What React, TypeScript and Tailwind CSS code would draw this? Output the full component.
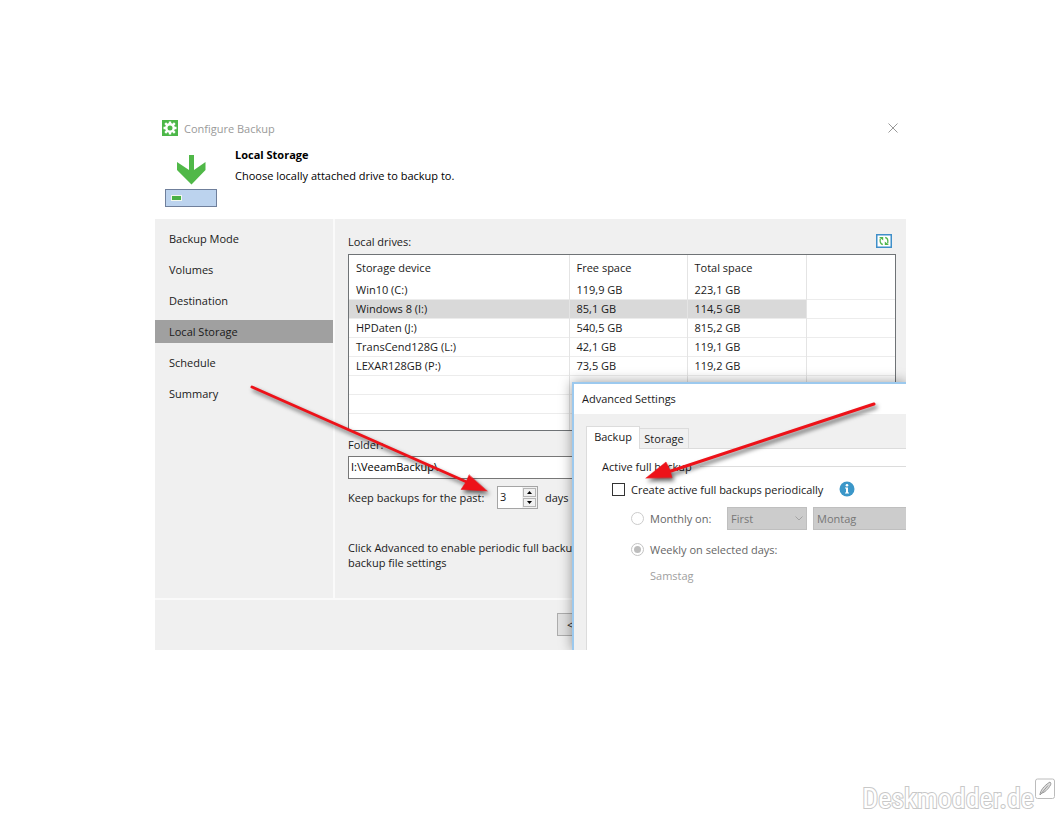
import React, { useState } from 'react';

const steps = ['Backup Mode', 'Volumes', 'Destination', 'Local Storage', 'Schedule', 'Summary'];

const drives = [
  { name: 'Win10 (C:)', free: '119,9 GB', total: '223,1 GB' },
  { name: 'Windows 8 (I:)', free: '85,1 GB', total: '114,5 GB' },
  { name: 'HPDaten (J:)', free: '540,5 GB', total: '815,2 GB' },
  { name: 'TransCend128G (L:)', free: '42,1 GB', total: '119,1 GB' },
  { name: 'LEXAR128GB (P:)', free: '73,5 GB', total: '119,2 GB' },
];

const GearIcon = () => (
  <svg width="16" height="16" viewBox="0 0 16 16" className="shrink-0">
    <rect width="16" height="16" fill="#4cb748" />
    <circle cx="8" cy="8" r="3.700" fill="none" stroke="#fff" strokeWidth="2.400" />
    <g stroke="#fff" strokeWidth="2.400">
      <path d="M8 1.500v2.500M8 12v2.500M1.500 8H4M12 8h2.500M3.200 3.200l2 2M10.800 10.800l2 2M12.800 3.200l-2 2M5.200 10.800l-2 2" />
    </g>
  </svg>
);

const DriveIcon = () => (
  <svg width="53" height="53" viewBox="0 0 53 53" className="shrink-0">
    <path d="M24 0h5v15l11.500-8v8L26.500 29.500 12 15V7l12 8z" fill="#50b848" />
    <rect x="0.500" y="34.500" width="51" height="17" fill="#bcd3ee" stroke="#6f7f9b" />
    <rect x="6.500" y="40.500" width="10" height="5" fill="#48b045" stroke="#f2f8ef" />
  </svg>
);

const RefreshIcon = () => (
  <svg width="16" height="14" viewBox="0 0 16 14">
    <rect x="0.750" y="0.750" width="14.500" height="12.500" fill="#fff" stroke="#3f8fc9" strokeWidth="1.500" />
    <path d="M6.800 10.500C4.500 10 3.800 7.500 4.300 4.500" fill="none" stroke="#52b54b" strokeWidth="1.300" />
    <path d="M9.200 3.500c2.300.5 3 3 2.500 6" fill="none" stroke="#52b54b" strokeWidth="1.300" />
    <path d="M3 3h4.200v3.500zM13 11H8.800V7.500z" fill="#52b54b" />
  </svg>
);

const Arrows = () => (
  <svg viewBox="0 0 751 537" className="absolute left-0 top-0 w-[751px] h-[537px] pointer-events-none drop-shadow-[2px_3px_2px_rgba(0,0,0,0.6)]">
    <g fill="#ed1219" stroke="#ed1219" strokeLinecap="round">
      <path d="M97 274L314 370" strokeWidth="3" />
      <path d="M332 378L306 376.500L311 369L314 362z" strokeWidth="0.500" />
      <path d="M719 291L516 358" strokeWidth="3" />
      <path d="M491 365L511 349L515 357L517 364.500z" strokeWidth="0.500" />
    </g>
  </svg>
);

const DriveTable = () => {
  const [selected, setSelected] = useState(1);

  return (
    <div className="h-[177px] overflow-hidden border border-[#6f7376] bg-white">
      <table className="w-full table-fixed border-collapse text-left">
        <colgroup>
          <col className="w-[220px]" />
          <col className="w-[118px]" />
          <col className="w-[119px]" />
          <col />
        </colgroup>
        <thead>
          <tr className="h-[25px]">
            <th className="border-r border-[#e4e4e4] p-0 pl-[7px] font-normal">Storage device</th>
            <th className="border-r border-[#e4e4e4] p-0 pl-[7px] font-normal">Free space</th>
            <th className="border-r border-[#e4e4e4] p-0 pl-[7px] font-normal">Total space</th>
            <th className="p-0"></th>
          </tr>
        </thead>
        <tbody>
          {drives.map((drive, i) => {
            const fill = i === selected ? 'bg-[#d9d9d9]' : '';
            return (
              <tr key={drive.name} onClick={() => setSelected(i)} className="h-[19px] border-b border-[#ececec]">
                <td className={`border-r border-[#e4e4e4] p-0 pl-[7px] ${fill}`}>{drive.name}</td>
                <td className={`border-r border-[#e4e4e4] p-0 pl-[7px] ${fill}`}>{drive.free}</td>
                <td className={`border-r border-[#e4e4e4] p-0 pl-[7px] ${fill}`}>{drive.total}</td>
                <td className="p-0"></td>
              </tr>
            );
          })}
          {[0, 1, 2].map((i) => (
            <tr key={i} className="h-[19px] border-b border-[#ececec]">
              <td className="border-r border-[#e4e4e4] p-0"></td>
              <td className="border-r border-[#e4e4e4] p-0"></td>
              <td className="border-r border-[#e4e4e4] p-0"></td>
              <td className="p-0"></td>
            </tr>
          ))}
        </tbody>
      </table>
    </div>
  );
};

const AdvancedSettings = () => (
  <div
    role="dialog"
    aria-labelledby="advanced-title"
    className="absolute left-[417px] right-0 top-[269px] bottom-0 flex flex-col overflow-hidden border-l-2 border-t-2 border-[#9cc9ee] bg-[#f0f0f0] shadow-[0_0_12px_rgba(0,0,0,0.4)]"
  >
    <h2 id="advanced-title" className="h-[30px] shrink-0 bg-white pl-2 leading-[30px]">Advanced Settings</h2>

    <div role="tablist" className="flex shrink-0 items-end pl-3 pt-3">
      <button role="tab" aria-selected="true" className="h-[23px] w-[54px] border border-b-0 border-[#dcdcdc] bg-white pb-[3px]">
        Backup
      </button>
      <button role="tab" aria-selected="false" className="h-[21px] w-[49px] border border-l-0 border-[#dcdcdc] pb-px">
        Storage
      </button>
      <span className="flex-1 border-b border-[#dcdcdc]"></span>
    </div>

    <div role="tabpanel" className="ml-3 flex-1 border-l border-[#dcdcdc] bg-white pl-[15px] pt-[10px]">
      <div className="flex items-center gap-2">
        <span className="whitespace-nowrap">Active full backup</span>
        <span className="h-px flex-1 bg-[#dcdcdc]"></span>
      </div>

      <div className="mt-[7px] flex items-center pl-[10px]">
        <input id="periodic" type="checkbox" className="h-[13px] w-[13px] appearance-none border border-[#333] bg-white checked:bg-[#333]" />
        <label htmlFor="periodic" className="ml-[6px] whitespace-nowrap">Create active full backups periodically</label>
        <svg width="16" height="16" viewBox="0 0 16 16" className="ml-4">
          <circle cx="8" cy="8" r="7.500" fill="#3b97c9" />
          <circle cx="8" cy="4.300" r="1.300" fill="#fff" />
          <path d="M6 6.500h3v5h1v1H6v-1h1v-4H6z" fill="#fff" />
        </svg>
      </div>

      <div className="mt-[10px] flex h-[23px] items-center pl-[29px] text-[#666]">
        <input id="monthly" type="radio" name="period" disabled className="h-[13px] w-[13px] shrink-0 appearance-none rounded-full border border-[#ccc] bg-white" />
        <label htmlFor="monthly" className="ml-[6px] w-[77px] shrink-0">Monthly on:</label>
        <div className="relative w-[80px] shrink-0">
          <select aria-label="Week" disabled className="h-[23px] w-full appearance-none border border-[#bfbfbf] bg-[#cccccc] pl-[3px] text-[#777] opacity-100">
            <option>First</option>
          </select>
          <svg width="8" height="5" viewBox="0 0 8 5" className="absolute right-1 top-[9px]">
            <path d="M0.500 0.500L4 4L7.500 0.500" fill="none" stroke="#a3a3a3" />
          </svg>
        </div>
        <select aria-label="Weekday" disabled className="ml-[6px] h-[23px] w-[120px] shrink-0 appearance-none border border-[#bfbfbf] bg-[#cccccc] pl-[3px] text-[#777] opacity-100">
          <option>Montag</option>
        </select>
      </div>

      <div className="mt-3 flex items-center pl-[29px] text-[#666]">
        <span className="relative flex h-[13px] w-[13px] items-center justify-center rounded-full border border-[#c4c4c4]">
          <input id="weekly" type="radio" name="period" disabled defaultChecked className="h-[7px] w-[7px] appearance-none rounded-full bg-[#bdbdbd]" />
        </span>
        <label htmlFor="weekly" className="ml-[6px]">Weekly on selected days:</label>
      </div>
      <p className="mt-[11px] pl-12 text-[#a0a0a0]">Samstag</p>
    </div>
  </div>
);

const App: React.FC = () => {
  const [days, setDays] = useState(3);
  const [folder, setFolder] = useState('I:\\VeeamBackup\\');

  return (
    <div className="relative min-h-screen overflow-hidden bg-white pb-[166px] pl-[155px] pr-[150px] pt-[113px] font-['Open_Sans','Noto_Sans',sans-serif] text-[11px] leading-[15px] text-[#1a1a1a]">
      <main className="relative overflow-hidden">
        <div className="flex h-[30px] items-center pl-[7px] pr-[7px]">
          <GearIcon />
          <span className="ml-[6px] flex-1 text-[#9a9a9a]">Configure Backup</span>
          <button aria-label="Close" className="p-px">
            <svg width="10" height="10" viewBox="0 0 10 10">
              <path d="M0.500 0.500l9 9M9.500 0.500l-9 9" stroke="#999" />
            </svg>
          </button>
        </div>

        <header className="flex h-[76px] pl-[10px]">
          <div className="pt-3">
            <DriveIcon />
          </div>
          <div className="pl-[17px] pt-1">
            <h1 className="font-bold text-black">Local Storage</h1>
            <p className="mt-[6px] text-black">Choose locally attached drive to backup to.</p>
          </div>
        </header>

        <div className="flex bg-[#f0f0f0]">
          <nav className="w-[180px] shrink-0 border-r-2 border-[#fafafa] pt-2">
            <ul className="flex flex-col gap-2">
              {steps.map((step) => (
                <li key={step}>
                  <a
                    href="#"
                    className={`block h-[23px] pl-[14px] leading-[23px] ${step === 'Local Storage' ? 'bg-[#a0a0a0]' : ''}`}
                  >
                    {step}
                  </a>
                </li>
              ))}
            </ul>
          </nav>

          <section className="min-w-0 flex-1 pb-7 pl-[13px] pr-[10px] pt-[15px]">
            <div className="mb-[6px] flex h-[14px] items-center justify-between pr-1">
              <span>Local drives:</span>
              <button aria-label="Refresh">
                <RefreshIcon />
              </button>
            </div>

            <DriveTable />

            <label htmlFor="folder" className="mt-[6px] block">Folder:</label>
            <input
              id="folder"
              type="text"
              value={folder}
              onChange={(e) => setFolder(e.target.value)}
              className="mt-1 block h-[23px] w-full border border-[#777] bg-white px-[2px] pb-[2px] text-black"
            />

            <div className="mt-[7px] flex h-[23px] items-center">
              <label htmlFor="days" className="w-[149px] whitespace-nowrap">Keep backups for the past:</label>
              <div className="flex h-[23px] w-[41px] border border-[#a5a5a5] bg-white">
                <input
                  id="days"
                  type="text"
                  value={days}
                  onChange={(e) => setDays(Number(e.target.value) || 0)}
                  className="h-[18px] w-6 pl-[2px]"
                />
                <div className="flex flex-1 flex-col gap-px bg-[#f0f0f0] p-px">
                  <button aria-label="More days" onClick={() => setDays(days + 1)} className="flex flex-1 items-center justify-center border border-[#b5b5b5]">
                    <svg width="5" height="3" viewBox="0 0 5 3"><path d="M0 3L2.500 0L5 3z" fill="#000" /></svg>
                  </button>
                  <button aria-label="Fewer days" onClick={() => setDays(days - 1)} className="flex flex-1 items-center justify-center border border-[#b5b5b5]">
                    <svg width="5" height="3" viewBox="0 0 5 3"><path d="M0 0L2.500 3L5 0z" fill="#000" /></svg>
                  </button>
                </div>
              </div>
              <span className="ml-[7px]">days</span>
            </div>

            <p className="mt-[31px]">
              Click Advanced to enable periodic full backup
              <br />
              backup file settings
            </p>
          </section>
        </div>

        <footer className="h-[52px] border-t-2 border-[#fafafa] bg-[#f0f0f0] pl-[402px] pt-[13px]">
          <button className="h-[23px] w-[75px] border border-[#adadad] bg-[#e1e1e1] pl-[9px] text-left">&lt; Back</button>
        </footer>

        <AdvancedSettings />
        <Arrows />
      </main>

      {/* site mark in the corner */}
      <div className="absolute bottom-0 right-0 flex items-start gap-px">
        <span className="pt-1 font-['Roboto_Condensed','Open_Sans_Condensed','Liberation_Sans',sans-serif] text-[28px] leading-[34px] text-white [-webkit-text-stroke:2px_#c8c8c8] [paint-order:stroke_fill]">
          Deskmodder.de
        </span>
        <svg width="21" height="22" viewBox="0 0 21 22">
          <rect x="0.500" y="1" width="19" height="19.500" rx="2" fill="#fff" stroke="#bcbcbc" />
          <path d="M5 17C5 13 9 7.500 15 4C16 5 16 6 15.500 7C13 11.500 9.500 14.500 7 15zM5 17L13 7.500" fill="#ddd" stroke="#9a9a9a" />
        </svg>
      </div>
    </div>
  );
};

export default App;
